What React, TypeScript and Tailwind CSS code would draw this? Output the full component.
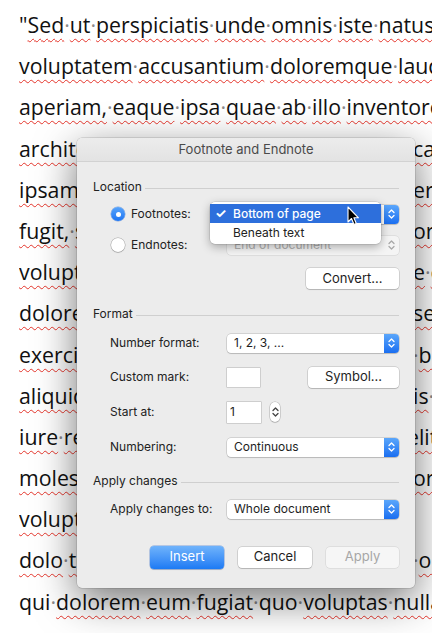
import React from 'react';

type Line = { left: string; right?: string; w?: string };

const LINES: Line[] = [
  { left: '"Sed ut perspiciatis unde omnis iste natus error sit' },
  { left: 'voluptatem accusantium doloremque laudantium, totam rem' },
  { left: 'aperiam, eaque ipsa quae ab illo inventore veritatis et quasi' },
  { left: 'architecto beatae vitae dicta sunt expli', right: 'cabo. Nemo' },
  { left: 'ipsam voluptatem quia voluptas sit aut odit', right: 'error sit' },
  { left: 'fugit, sed quia consequuntur magni dolores', right: 'ore magni' },
  { left: 'voluptatem sequi nesciunt. Neque porro quisquam', right: 'e consequ' },
  { left: 'dolorem ipsum quia dolor sit amet, con', right: 'sed quia' },
  { left: 'exercitationem ullam corporis suscipit', right: ' bo' },
  { left: 'aliquid ex ea commodi consequatur? Quis autem', right: 'is nostrum' },
  { left: 'iure reprehenderit qui in ea voluptate velit', right: 'elit esse', w: 'w-[388px]' },
  { left: 'molestiae consequatur, vel illum qui dolorem', right: 'ore eum' },
  { left: 'voluptas nulla pariatur.', right: '' },
  { left: 'dolo tempora incidunt ut labore et dolore magnam', right: ' or' },
  { left: 'qui dolorem eum fugiat quo voluptas nulla pariatur' },
];

const PLAIN = new Set(['qui', 'quo']);

function Words({ text }: { text: string }) {
  const words = text.split(' ');
  return (
    <>
      {words.map((w, i) => {
        const quote = w.startsWith('"');
        const core = quote ? w.slice(1) : w;
        return (
          <React.Fragment key={i}>
            {i > 0 && <span className="text-[#8a8a8a]">·</span>}
            {quote && <span>"</span>}
            {core && (
              <span
                className={
                  PLAIN.has(core)
                    ? ''
                    : 'underline decoration-wavy decoration-[#e5352b] decoration-1 underline-offset-[5px]'
                }
              >
                {core}
              </span>
            )}
          </React.Fragment>
        );
      })}
    </>
  );
}

function DocLine({ line }: { line: Line }) {
  if (line.right === undefined) {
    return (
      <div className="h-[41.2px] whitespace-nowrap leading-[41.2px]">
        <Words text={line.left} />
      </div>
    );
  }
  return (
    <div className="flex h-[41.2px] whitespace-nowrap leading-[41.2px]">
      <div className={`${line.w ?? 'w-[394px]'} shrink-0 overflow-hidden`}>
        <Words text={line.left} />
      </div>
      <div className="shrink-0">{line.right && <Words text={line.right} />}</div>
    </div>
  );
}

function UpDown({ color = '#ffffff' }: { color?: string }) {
  return (
    <svg width="7" height="12" viewBox="0 0 7 12">
      <path d="M1 4.5 L3.5 2 L6 4.5" stroke={color} strokeWidth="1.3" fill="none" strokeLinecap="round" strokeLinejoin="round" />
      <path d="M1 7.5 L3.5 10 L6 7.5" stroke={color} strokeWidth="1.3" fill="none" strokeLinecap="round" strokeLinejoin="round" />
    </svg>
  );
}

function Select({ text, disabled = false }: { text: string; disabled?: boolean }) {
  return (
    <div
      className={`flex h-[19px] w-[172px] items-center rounded-[4px] ${
        disabled
          ? 'bg-[#f4f4f4] shadow-[0_0_0_0.5px_rgba(0,0,0,0.12)]'
          : 'bg-white shadow-[0_0_0_0.5px_rgba(0,0,0,0.22),0_1px_1px_rgba(0,0,0,0.12)]'
      }`}
    >
      <span className={`flex-1 pl-[7px] text-[12px] ${disabled ? 'text-[#b0b0b0]' : 'text-[#1e1e1e]'}`}>{text}</span>
      {disabled ? (
        <div className="flex h-full w-[15px] items-center justify-center">
          <UpDown color="#a8a8a8" />
        </div>
      ) : (
        <div className="flex h-full w-[15px] items-center justify-center rounded-r-[4px] bg-gradient-to-b from-[#5aa6fb] to-[#1a6ef0]">
          <UpDown />
        </div>
      )}
    </div>
  );
}

function Button({ children, w, kind = 'normal' }: { children: React.ReactNode; w: string; kind?: 'normal' | 'primary' | 'disabled' }) {
  const base = 'flex h-[21px] items-center justify-center rounded-[4px] text-[13px]';
  if (kind === 'primary')
    return (
      <div className={`${base} ${w} h-[23px] bg-gradient-to-b from-[#6fb3fb] to-[#1b7af4] text-white shadow-[0_0_0_0.5px_rgba(20,90,200,0.5),0_1px_1px_rgba(0,0,0,0.15)]`}>
        {children}
      </div>
    );
  if (kind === 'disabled')
    return (
      <div className={`${base} ${w} bg-[#f6f6f6] text-[#a6a6a6] shadow-[0_0_0_0.5px_rgba(0,0,0,0.12)]`}>{children}</div>
    );
  return (
    <div className={`${base} ${w} bg-white text-[#1e1e1e] shadow-[0_0_0_0.5px_rgba(0,0,0,0.22),0_1px_1px_rgba(0,0,0,0.14)]`}>
      {children}
    </div>
  );
}

function SectionHeader({ title }: { title: string }) {
  return (
    <div className="flex h-[16px] items-center gap-[3px]">
      <span className="text-[12px] text-[#222]">{title}</span>
      <div className="mt-[3px] h-px flex-1 bg-[#cfcfcf]" />
    </div>
  );
}

function Radio({ on }: { on: boolean }) {
  return on ? (
    <div className="flex h-[14px] w-[14px] items-center justify-center rounded-full bg-gradient-to-b from-[#56a3fb] to-[#1c74f2] shadow-[0_0_0_0.5px_rgba(20,90,200,0.5)]">
      <div className="h-[5px] w-[5px] rounded-full bg-white" />
    </div>
  ) : (
    <div className="h-[14px] w-[14px] rounded-full bg-white shadow-[0_0_0_0.5px_rgba(0,0,0,0.3),0_1px_1px_rgba(0,0,0,0.12)]" />
  );
}

function Cursor() {
  return (
    <svg width="13" height="21" viewBox="0 0 13 21">
      <path d="M1 1 L1 16 L4.5 12.5 L7 18.5 L9.3 17.5 L6.9 11.8 L11.5 11.8 Z" fill="#000" stroke="#fff" strokeWidth="1.1" strokeLinejoin="round" />
    </svg>
  );
}

export default function App() {
  return (
    <div className="relative h-[633px] w-[432px] overflow-hidden bg-white">
      <div className="flex flex-col pl-[19px] pt-[4px] text-[21.3px] text-[#111] [font-family:'Open_Sans',sans-serif]">
        {LINES.map((l, i) => (
          <DocLine key={i} line={l} />
        ))}
      </div>

      <div className="absolute left-[77px] top-[138px] flex h-[450px] w-[338px] flex-col rounded-[5px] bg-[#ececec] shadow-[0_12px_40px_rgba(0,0,0,0.55),0_0_0_0.5px_rgba(0,0,0,0.2)] [font-family:Inter,'Liberation_Sans',sans-serif]">
        <div className="flex h-[24px] items-center justify-center rounded-t-[5px] border-b border-[#d2d2d2] bg-gradient-to-b from-[#ececec] to-[#e3e3e3] text-[13px] text-[#4a4a4a]">
          Footnote and Endnote
        </div>

        <div className="flex flex-col px-[16px] pt-[17px]">
          <SectionHeader title="Location" />

          <div className="mt-[8px] flex h-[22px] items-center pl-[18px]">
            <Radio on />
            <span className="ml-[6px] w-[96px] text-[12px] text-[#222]">Footnotes:</span>
            <Select text="Bottom of page" />
          </div>

          <div className="mt-[9px] flex h-[22px] items-center pl-[18px]">
            <Radio on={false} />
            <span className="ml-[6px] w-[96px] text-[12px] text-[#222]">Endnotes:</span>
            <Select text="End of document" disabled />
          </div>

          <div className="mt-[12px] flex h-[20px] justify-end">
            <Button w="w-[93px]">Convert...</Button>
          </div>

          <div className="mt-[18px]">
            <SectionHeader title="Format" />
          </div>

          <div className="mt-[11px] flex h-[20px] items-center pl-[17px]">
            <span className="w-[117px] text-[12px] text-[#222]">Number format:</span>
            <Select text="1, 2, 3, ..." />
          </div>

          <div className="mt-[14px] flex h-[20px] items-center pl-[17px]">
            <span className="w-[117px] text-[12px] text-[#222]">Custom mark:</span>
            <div className="h-[19px] w-[33px] bg-white shadow-[0_0_0_0.5px_rgba(0,0,0,0.25)]" />
            <div className="ml-auto">
              <Button w="w-[91px]">Symbol...</Button>
            </div>
          </div>

          <div className="mt-[14px] flex h-[22px] items-center pl-[17px]">
            <span className="w-[117px] text-[12px] text-[#222]">Start at:</span>
            <div className="flex h-[21px] w-[34px] items-center bg-white pl-[3px] text-[12px] text-[#222] shadow-[0_0_0_0.5px_rgba(0,0,0,0.25)]">
              1
            </div>
            <div className="ml-[9px] flex h-[20px] w-[10px] flex-col items-center justify-center rounded-full bg-white shadow-[0_0_0_0.5px_rgba(0,0,0,0.25),0_1px_1px_rgba(0,0,0,0.1)]">
              <UpDown color="#444" />
            </div>
          </div>

          <div className="mt-[14px] flex h-[20px] items-center pl-[17px]">
            <span className="w-[117px] text-[12px] text-[#222]">Numbering:</span>
            <Select text="Continuous" />
          </div>

          <div className="mt-[16px]">
            <SectionHeader title="Apply changes" />
          </div>

          <div className="mt-[10px] flex h-[20px] items-center pl-[17px]">
            <span className="w-[117px] text-[12px] text-[#222]">Apply changes to:</span>
            <Select text="Whole document" />
          </div>

          <div className="mt-[26px] flex h-[24px] items-center justify-end gap-[14px]">
            <Button w="w-[74px]" kind="primary">Insert</Button>
            <Button w="w-[74px]">Cancel</Button>
            <Button w="w-[73px]" kind="disabled">Apply</Button>
          </div>
        </div>

        <div className="absolute left-[133px] top-[64px] flex w-[171px] flex-col rounded-[5px] bg-white py-[2px] text-[12px] shadow-[0_3px_10px_rgba(0,0,0,0.3),0_0_0_0.5px_rgba(0,0,0,0.15)]">
          <div className="flex h-[19px] items-center bg-[#2d6fdc] text-white">
            <span className="w-[23px] pl-[5px] text-[13px] font-bold">✓</span>
            <span className="font-medium">Bottom of page</span>
          </div>
          <div className="flex h-[19px] items-center text-[#222]">
            <span className="w-[23px]" />
            <span>Beneath text</span>
          </div>
        </div>

        <div className="absolute left-[270px] top-[68px]">
          <Cursor />
        </div>
      </div>
    </div>
  );
}
